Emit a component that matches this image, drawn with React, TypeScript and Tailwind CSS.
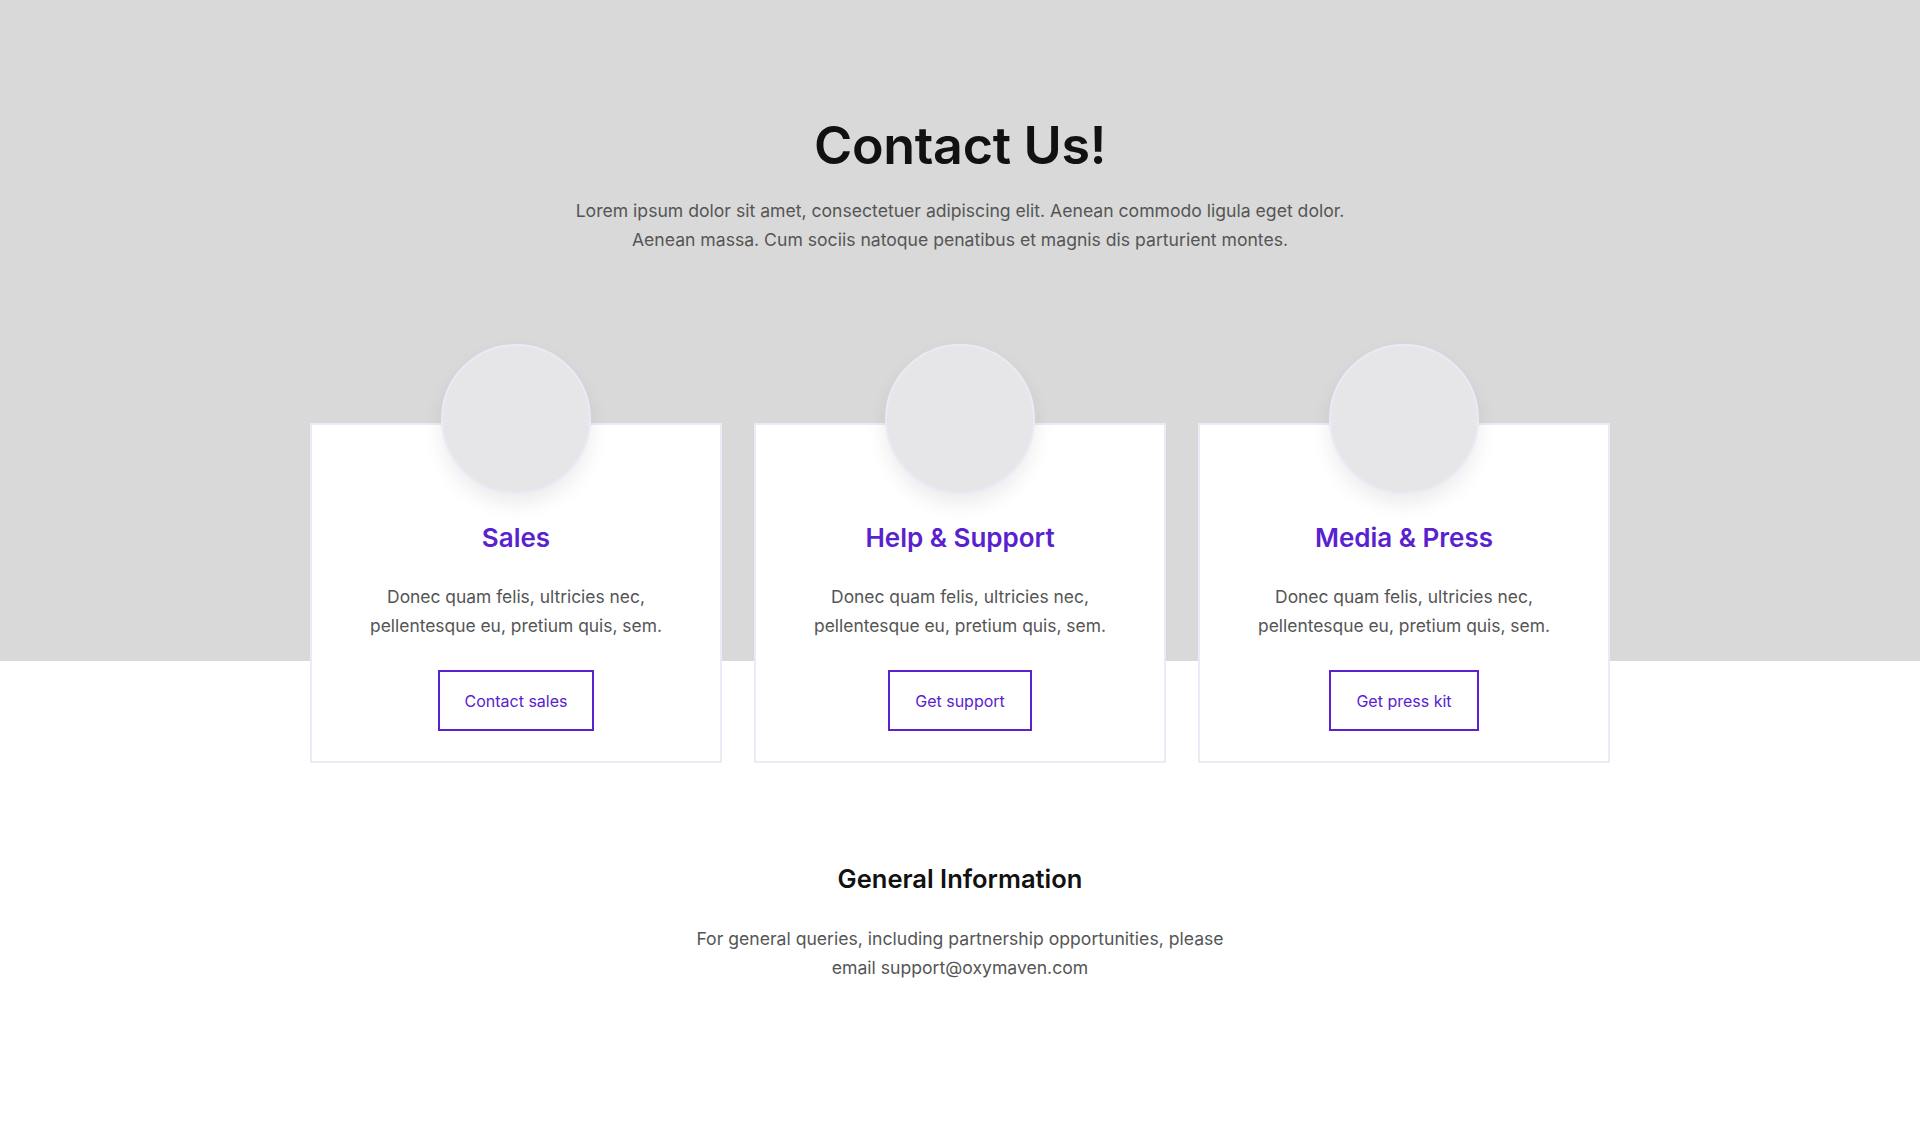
import React from "react";

const cards = [
  { title: "Sales", btn: "Contact sales" },
  { title: "Help & Support", btn: "Get support" },
  { title: "Media & Press", btn: "Get press kit" },
];

export default function App() {
  return (
    <div className="min-h-[1140px] bg-white" style={{ fontFamily: '"Inter", "Liberation Sans", sans-serif' }}>
      <section className="bg-[#d9d9d9] pt-[115px] h-[661px]">
        <h1 className="text-center text-[52px] leading-[62px] font-semibold text-[#111] tracking-[-0.3px]">Contact Us!</h1>
        <p className="mt-[19px] text-center text-[17.6px] leading-[29px] text-[#555]">
          Lorem ipsum dolor sit amet, consectetuer adipiscing elit. Aenean commodo ligula eget dolor.
          <br />
          Aenean massa. Cum sociis natoque penatibus et magnis dis parturient montes.
        </p>
        <div className="mt-[90px] flex justify-center gap-[32px]">
          {cards.map((c) => (
            <div key={c.title} className="mt-[79px] w-[412px] h-[340px] bg-white border-2 border-[#ecebf5] flex flex-col items-center">
              <div className="-mt-[81px] w-[150px] h-[150px] rounded-full bg-[#e6e6e8] border-2 border-[#ebe9f7] shadow-[0_10px_20px_rgba(0,0,0,0.08)]" />
              <h3 className="mt-[28px] text-[26px] leading-[31px] font-semibold text-[#5a22cf]">{c.title}</h3>
              <p className="mt-[29px] text-center text-[17.4px] leading-[29px] text-[#555]">
                Donec quam felis, ultricies nec,
                <br />
                pellentesque eu, pretium quis, sem.
              </p>
              <button className="mt-[30px] h-[61px] px-[25px] border-2 border-[#5a22cf] text-[16px] text-[#5a22cf] bg-white">
                {c.btn}
              </button>
            </div>
          ))}
        </div>
      </section>
      <section className="pt-[203px] flex flex-col items-center">
        <h2 className="text-[25.5px] leading-[30px] font-semibold text-[#111]">General Information</h2>
        <p className="mt-[30px] w-[560px] text-center text-[17.6px] leading-[29px] text-[#555]">
          For general queries, including partnership opportunities, please
          <br />
          email support@oxymaven.com
        </p>
      </section>
    </div>
  );
}
